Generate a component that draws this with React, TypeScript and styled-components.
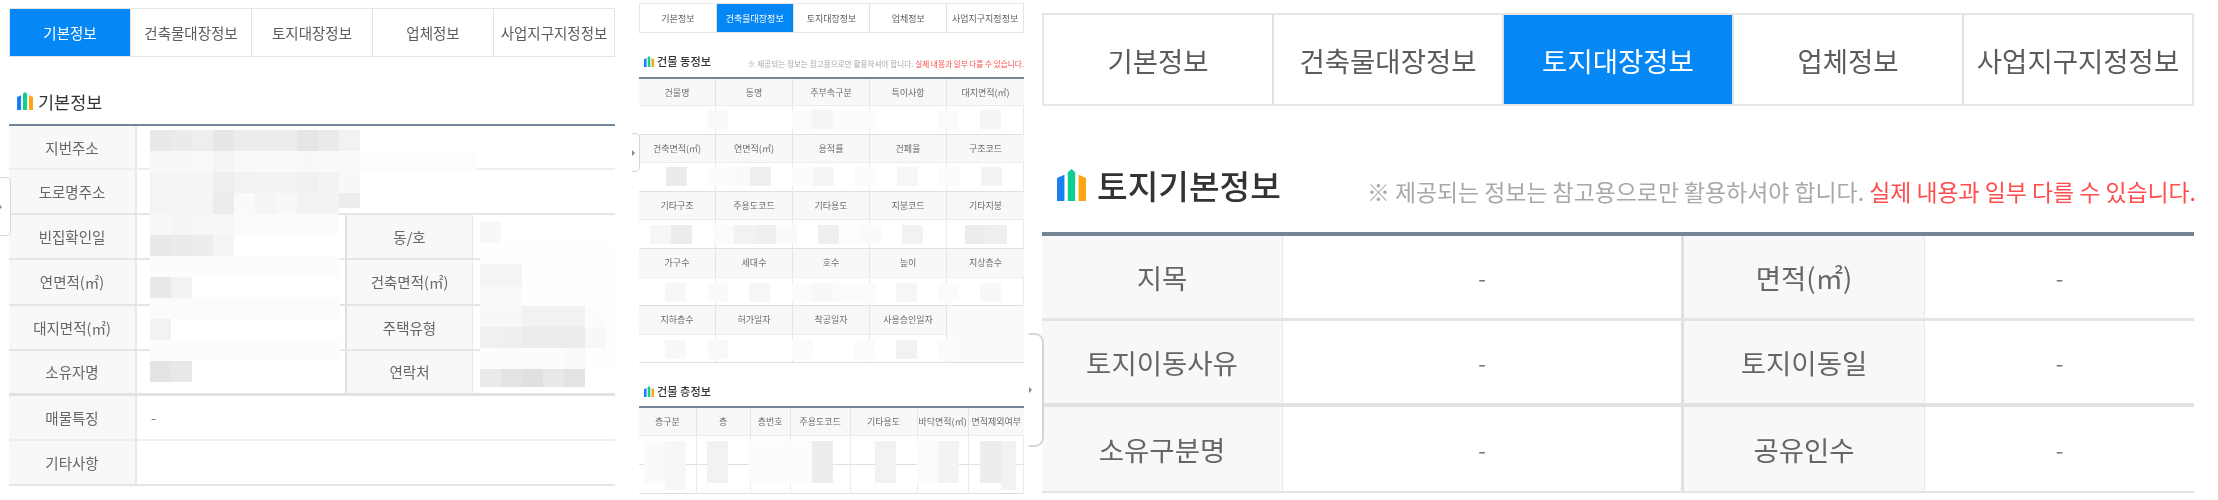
import React from "react";
import styled, { createGlobalStyle } from "styled-components";

const GlobalStyle = createGlobalStyle`
  html, body { margin: 0; padding: 0; background: #fff; }
  body { font-family: "Noto Sans CJK KR", "Noto Sans", sans-serif; color: #666; }
`;

const TABS = ["기본정보", "건축물대장정보", "토지대장정보", "업체정보", "사업지구지정정보"];
const NOTICE = "※ 제공되는 정보는 참고용으로만 활용하셔야 합니다. ";
const NOTICE_RED = "실제 내용과 일부 다를 수 있습니다.";

const Page = styled.div`
  position: relative;
  width: 2218px;
  height: 500px;
  overflow: hidden;
  background: #fff;
  filter: blur(0.5px);
`;

const Panels = styled.div`
  display: flex;
  align-items: flex-start;
  padding-left: 9px;
`;

const Panel = styled.section<{ $width: number; $top: number; $gap: number }>`
  flex: none;
  width: ${p => p.$width}px;
  padding-top: ${p => p.$top}px;
  margin-right: ${p => p.$gap}px;
`;

const TabBar = styled.div<{ $height: number; $line: number }>`
  display: flex;
  box-sizing: border-box;
  height: ${p => p.$height}px;
  border: ${p => p.$line}px solid #e6e6e6;
`;

const Tab = styled.div<{ $active: boolean; $font: number; $line: number }>`
  flex: 1;
  display: flex;
  align-items: center;
  justify-content: center;
  white-space: nowrap;
  font-size: ${p => p.$font}px;
  color: ${p => (p.$active ? "#fff" : "#5c5c5c")};
  background: ${p => (p.$active ? "#0588f6" : "#fff")};
  border-right: ${p => p.$line}px solid #e2e2e2;
  &:last-child { border-right: 0; }
`;

const TitleRow = styled.div<{ $height: number; $pb: number; $pl: number }>`
  box-sizing: border-box;
  display: flex;
  align-items: flex-end;
  justify-content: space-between;
  height: ${p => p.$height}px;
  padding: 0 0 ${p => p.$pb}px ${p => p.$pl}px;
`;

const Title = styled.h3<{ $font: number; $gap: number; $weight: number }>`
  display: flex;
  align-items: center;
  gap: ${p => p.$gap}px;
  margin: 0;
  font-size: ${p => p.$font}px;
  font-weight: ${p => p.$weight};
  line-height: 1.2;
  color: #333;
  white-space: nowrap;
`;

const Notice = styled.p<{ $font: number; $over: number }>`
  margin: 0 ${p => -p.$over}px 0 0;
  font-size: ${p => p.$font}px;
  line-height: 1.2;
  color: #a8a8a8;
  white-space: nowrap;
  em { font-style: normal; color: #ff4d4d; }
`;

const InfoTable = styled.div<{ $rule: number }>`
  border-top: ${p => p.$rule}px solid #728697;
`;

const InfoRow = styled.div<{ $height: number; $line: number; $color: string }>`
  box-sizing: border-box;
  display: flex;
  height: ${p => p.$height}px;
  border-bottom: ${p => p.$line}px solid ${p => p.$color};
`;

const Label = styled.div<{ $width: number; $font: number; $line: number }>`
  flex: none;
  box-sizing: border-box;
  display: flex;
  align-items: center;
  justify-content: center;
  width: ${p => p.$width}px;
  font-size: ${p => p.$font}px;
  color: #666;
  background: #f8f8f8;
  border-right: ${p => p.$line}px solid #e8e8e8;
`;

const Value = styled.div<{ $width?: number; $font: number; $center?: boolean; $line: number; $pad: number }>`
  box-sizing: border-box;
  display: flex;
  align-items: center;
  justify-content: ${p => (p.$center ? "center" : "flex-start")};
  ${p => (p.$width ? `flex: none; width: ${p.$width}px;` : "flex: 1;")}
  padding-left: ${p => p.$pad}px;
  font-size: ${p => p.$font}px;
  color: #777;
  border-right: ${p => p.$line}px solid #e0e0e0;
  &:last-child { border-right: 0; }
`;

const GridTable = styled.div<{ $cols: string; $first: number }>`
  display: grid;
  grid-template-columns: ${p => p.$cols};
  grid-template-rows: ${p => p.$first}px;
  grid-auto-rows: 28.6px;
  border-top: 2px solid #728697;
`;

const Head = styled.div`
  display: flex;
  align-items: center;
  justify-content: center;
  box-sizing: border-box;
  font-size: 9px;
  color: #6c6c6c;
  white-space: nowrap;
  background: #f8f8f8;
  border-right: 1px solid #e4e4e4;
  border-bottom: 1px solid #ededed;
  &:nth-child(5n) { border-right: 0; }
`;

const Body = styled.div`
  box-sizing: border-box;
  border-right: 1px solid #ebebeb;
  border-bottom: 1px solid #e0e0e0;
`;

const Blank = styled.div`
  grid-column: 5;
  grid-row: 9 / span 2;
  background: #fafafa;
  border-bottom: 1px solid #e0e0e0;
`;

const FloorHead = styled(Head)`
  &:nth-child(5n) { border-right: 1px solid #e8e8e8; }
  &:nth-child(7n) { border-right: 0; }
`;

const Tile = styled.i<{ $x: number; $y: number; $w: number; $h: number; $c: string }>`
  position: absolute;
  left: ${p => p.$x}px;
  top: ${p => p.$y}px;
  width: ${p => p.$w}px;
  height: ${p => p.$h}px;
  background: ${p => p.$c};
`;

const Handle = styled.div<{ $x: number; $y: number; $w: number; $h: number; $line: number; $radius: number }>`
  position: absolute;
  box-sizing: border-box;
  left: ${p => p.$x}px;
  top: ${p => p.$y}px;
  width: ${p => p.$w}px;
  height: ${p => p.$h}px;
  background: #fff;
  border: ${p => p.$line}px solid #d6d6d6;
  border-left: 0;
  border-radius: 0 ${p => p.$radius}px ${p => p.$radius}px 0;
  &::after {
    content: "";
    position: absolute;
    left: 0;
    top: 50%;
    margin-top: -3px;
    border-left: 3px solid #888;
    border-top: 3px solid transparent;
    border-bottom: 3px solid transparent;
  }
`;

function BarsIcon({ width }: { width: number }) {
  return (
    <svg width={width} viewBox="0 0 86 97" style={{ flex: "none" }}>
      <path d="M0 27 L22 17 V97 H0Z" fill="#1a7ff0" />
      <path d="M32 10 L43 0 L54 10 V97 H32Z" fill="#0fcf90" />
      <path d="M64 17 L86 27 V97 H64Z" fill="#ffa50f" />
    </svg>
  );
}

type T = { x: number; y: number; w: number; h: number; c: string };

const strip = (x: number, y: number, w: number, h: number, shades: string[]): T[] =>
  shades.map((s, i) => ({ x: x + i * w, y, w, h, c: "#" + s + s + s }));

const rect = (x: number, y: number, w: number, h: number, s: string): T => ({ x, y, w, h, c: "#" + s + s + s });

const TILES: T[] = [
  // first panel, address column
  ...strip(150, 130, 21, 21, ["e9", "eb", "ee", "e6", "ec", "ec", "ec", "e6", "ea", "f2"]),
  rect(150, 151, 326, 21, "fd"),
  ...strip(150, 151, 21, 21, ["f8", "f8", "f9", "f5", "f9", "f9", "f9", "f8", "f9", "f9"]),
  ...strip(150, 172, 21, 21, ["f4", "f4", "f5", "ef", "f2", "f3", "f3", "f0", "f3", "f8"]),
  ...strip(150, 193, 21, 21, ["f4", "f4", "f5", "ec", "fa", "f5", "f8", "f3", "f3"]),
  rect(339, 193, 21, 15, "ec"),
  ...strip(150, 214, 21, 21, ["f8", "f5", "f6", "f7", "fb", "fb", "fb", "fb", "fb"]),
  rect(150, 235, 190, 147, "ff"),
  ...strip(150, 235, 21, 21, ["e9", "eb", "ed", "f5"]),
  rect(150, 256, 190, 21, "fc"),
  ...strip(150, 277, 21, 21, ["e8", "f3"]),
  rect(150, 298, 190, 21, "fb"),
  ...strip(150, 319, 21, 21, ["f2"]),
  rect(150, 340, 190, 21, "fc"),
  ...strip(150, 361, 21, 21, ["e4", "e8"]),
  // first panel, right column
  ...strip(480, 222, 21, 21, ["f8"]),
  rect(480, 243, 135, 143, "fe"),
  ...strip(480, 264, 21, 21, ["f4", "f4"]),
  ...strip(480, 285, 21, 21, ["f9", "f9"]),
  ...strip(480, 306, 21, 21, ["f8", "f8", "f2", "f2", "f2", "fc"]),
  ...strip(480, 327, 21, 21, ["f0", "ef", "ec", "ec", "ec", "f8"]),
  ...strip(480, 348, 21, 21, ["fc", "fc", "fc", "fc", "fa"]),
  rect(480, 369, 135, 18, "ff"),
  ...strip(480, 369, 21, 18, ["ea", "e3", "e0", "e8", "e3"]),
  // second panel, dong rows
  rect(708, 110, 20, 19, "f9"),
  rect(792, 110, 84, 19, "fb"),
  rect(812, 110, 21, 19, "f5"),
  rect(938, 110, 21, 19, "fb"),
  rect(980, 110, 21, 19, "f5"),
  rect(666, 167, 21, 19, "eb"),
  rect(708, 167, 21, 19, "fc"),
  rect(729, 167, 21, 19, "fa"),
  rect(750, 167, 21, 19, "ef"),
  rect(792, 167, 21, 19, "fc"),
  rect(813, 167, 21, 19, "f5"),
  rect(855, 167, 21, 19, "fb"),
  rect(897, 167, 21, 19, "f6"),
  rect(939, 167, 21, 19, "fb"),
  rect(981, 167, 21, 19, "f3"),
  rect(650, 225, 21, 19, "f6"),
  rect(671, 225, 21, 19, "ec"),
  rect(713, 225, 21, 19, "fb"),
  rect(734, 225, 21, 19, "f2"),
  rect(755, 225, 21, 19, "ef"),
  rect(776, 225, 21, 19, "fa"),
  rect(818, 225, 21, 19, "ef"),
  rect(839, 225, 21, 19, "fd"),
  rect(860, 225, 21, 19, "fa"),
  rect(902, 225, 21, 19, "f2"),
  rect(965, 225, 21, 19, "ec"),
  rect(986, 225, 21, 19, "ee"),
  rect(665, 283, 21, 19, "f7"),
  rect(708, 283, 20, 19, "fa"),
  rect(749, 283, 21, 19, "f6"),
  rect(792, 283, 84, 19, "fb"),
  rect(812, 283, 21, 19, "f8"),
  rect(896, 283, 21, 19, "f6"),
  rect(938, 283, 21, 19, "fb"),
  rect(980, 283, 21, 19, "f8"),
  rect(665, 340, 21, 19, "f8"),
  rect(708, 340, 20, 19, "f9"),
  rect(792, 340, 21, 19, "fb"),
  rect(854, 340, 21, 19, "fb"),
  rect(896, 340, 21, 19, "f2"),
  rect(938, 340, 21, 19, "fb"),
  // second panel, floor rows
  rect(644, 441, 21, 42, "fa"),
  rect(665, 441, 21, 49, "f7"),
  rect(707, 441, 21, 42, "f2"),
  rect(749, 441, 42, 42, "fc"),
  rect(791, 441, 21, 42, "fc"),
  rect(812, 441, 21, 42, "ed"),
  rect(875, 441, 21, 42, "f2"),
  rect(917, 441, 21, 42, "fb"),
  rect(938, 441, 21, 42, "f3"),
  rect(980, 441, 21, 42, "ed"),
  rect(1001, 441, 15, 49, "f2"),
];

const MAIN_ROWS = [
  { a: "지번주소", line: 2, color: "#eeeeee" },
  { a: "도로명주소", line: 2, color: "#e6e6e6" },
  { a: "빈집확인일", b: "동/호", line: 2, color: "#e6e6e6" },
  { a: "연면적(㎡)", b: "건축면적(㎡)", line: 2, color: "#e4e4e4" },
  { a: "대지면적(㎡)", b: "주택유형", line: 2, color: "#e6e6e6" },
  { a: "소유자명", b: "연락처", line: 3, color: "#e2e2e2" },
  { a: "매물특징", v: "-", line: 2, color: "#eeeeee" },
  { a: "기타사항", line: 2, color: "#e4e4e4" },
];

const LAND_ROWS = [
  { a: "지목", b: "면적(㎡)", line: 3, color: "#e4e4e4" },
  { a: "토지이동사유", b: "토지이동일", line: 4, color: "#e2e2e2" },
  { a: "소유구분명", b: "공유인수", line: 2, color: "#e4e4e4" },
];

const DONG_ROWS = [
  ["건물명", "동명", "주부속구분", "특이사항", "대지면적(㎡)"],
  ["건축면적(㎡)", "연면적(㎡)", "용적률", "건폐율", "구조코드"],
  ["기타구조", "주용도코드", "기타용도", "지붕코드", "기타지붕"],
  ["가구수", "세대수", "호수", "높이", "지상층수"],
];

const FLOOR_HEADS = ["층구분", "층", "층번호", "주용도코드", "기타용도", "바닥면적(㎡)", "면적제외여부"];

function Tabs(props: { active: number; height: number; font: number; line: number }) {
  return (
    <TabBar $height={props.height} $line={props.line}>
      {TABS.map((t, i) => (
        <Tab key={t} $active={i === props.active} $font={props.font} $line={props.line}>
          {t}
        </Tab>
      ))}
    </TabBar>
  );
}

function BasicPanel() {
  return (
    <Panel $width={606} $top={8} $gap={24}>
      <Tabs active={0} height={49} font={14.5} line={1} />
      <TitleRow $height={67} $pb={12} $pl={8}>
        <Title $font={17.5} $gap={5} $weight={400}>
          <BarsIcon width={16} />
          기본정보
        </Title>
      </TitleRow>
      <InfoTable $rule={2}>
        {MAIN_ROWS.map((r, i) => (
          <InfoRow key={r.a} $height={i === 0 ? 44 : 45.2} $line={r.line} $color={r.color}>
            <Label $width={128} $font={14.5} $line={2}>
              {r.a}
            </Label>
            {r.b ? (
              <>
                <Value $width={210} $font={14.5} $line={2} $pad={0} />
                <Label $width={126} $font={14.5} $line={1}>
                  {r.b}
                </Label>
                <Value $font={14.5} $line={0} $pad={0} />
              </>
            ) : (
              <Value $font={14.5} $line={0} $pad={14}>
                {r.v}
              </Value>
            )}
          </InfoRow>
        ))}
      </InfoTable>
    </Panel>
  );
}

function BuildingPanel() {
  return (
    <Panel $width={385} $top={3} $gap={18}>
      <Tabs active={1} height={30} font={9} line={1} />
      <TitleRow $height={44} $pb={9} $pl={5}>
        <Title $font={11.2} $gap={3} $weight={500}>
          <BarsIcon width={10} />
          건물 동정보
        </Title>
        <Notice $font={7.63} $over={0}>
          {NOTICE}
          <em>{NOTICE_RED}</em>
        </Notice>
      </TitleRow>
      <GridTable $cols="repeat(5, 1fr)" $first={27}>
        {DONG_ROWS.map(row => (
          <React.Fragment key={row[0]}>
            {row.map(h => (
              <Head key={h}>{h}</Head>
            ))}
            {row.map(h => (
              <Body key={h} />
            ))}
          </React.Fragment>
        ))}
        {["지하층수", "허가일자", "착공일자", "사용승인일자"].map(h => (
          <Head key={h}>{h}</Head>
        ))}
        <Blank />
        {[0, 1, 2, 3].map(i => (
          <Body key={i} />
        ))}
      </GridTable>
      <TitleRow $height={43} $pb={8} $pl={5}>
        <Title $font={11.2} $gap={3} $weight={500}>
          <BarsIcon width={10} />
          건물 층정보
        </Title>
      </TitleRow>
      <GridTable $cols="57.6px 54px 40px 60px 67px 51px 1fr" $first={28}>
        {FLOOR_HEADS.map(h => (
          <FloorHead key={h}>{h}</FloorHead>
        ))}
        {[0, 1].map(r =>
          FLOOR_HEADS.map(h => <Body key={r + h} />)
        )}
      </GridTable>
    </Panel>
  );
}

function LandPanel() {
  return (
    <Panel $width={1152} $top={13} $gap={0}>
      <Tabs active={2} height={93} font={27.5} line={2} />
      <TitleRow $height={126} $pb={27} $pl={15}>
        <Title $font={33.3} $gap={11} $weight={500}>
          <BarsIcon width={29} />
          토지기본정보
        </Title>
        <Notice $font={22.9} $over={2}>
          {NOTICE}
          <em>{NOTICE_RED}</em>
        </Notice>
      </TitleRow>
      <InfoTable $rule={4}>
        {LAND_ROWS.map((r, i) => (
          <InfoRow key={r.a} $height={i === 0 ? 85 : 86} $line={r.line} $color={r.color}>
            <Label $width={241} $font={27.5} $line={1}>
              {r.a}
            </Label>
            <Value $width={401} $font={22} $center $line={3} $pad={0}>
              -
            </Value>
            <Label $width={241} $font={27.5} $line={1}>
              {r.b}
            </Label>
            <Value $font={22} $center $line={0} $pad={0}>
              -
            </Value>
          </InfoRow>
        ))}
      </InfoTable>
    </Panel>
  );
}

export default function App() {
  return (
    <>
      <GlobalStyle />
      <Page>
        <Panels>
          <BasicPanel />
          <BuildingPanel />
          <LandPanel />
        </Panels>
        {TILES.map((t, i) => (
          <Tile key={i} $x={t.x} $y={t.y} $w={t.w} $h={t.h} $c={t.c} />
        ))}
        <Handle $x={-1} $y={177} $w={12} $h={59} $line={1} $radius={5} />
        <Handle $x={632} $y={133} $w={8} $h={39} $line={1} $radius={5} />
        <Handle $x={1029} $y={333} $w={15} $h={114} $line={2} $radius={9} />
      </Page>
    </>
  );
}
